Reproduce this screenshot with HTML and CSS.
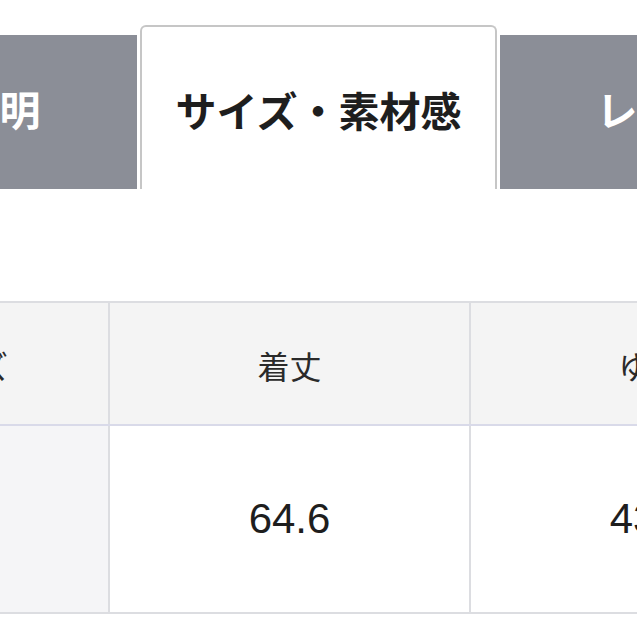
FILE: index.html
```html
<!DOCTYPE html>
<html lang="ja">
<head>
<meta charset="utf-8">
<title>サイズ・素材感</title>
<link rel="stylesheet" href="styles.css">
</head>
<body>
<div class="page">
  <nav class="tabs">
    <div class="tab">商品説明</div>
    <div class="tab tab-active">サイズ・素材感</div>
    <div class="tab">レビュー</div>
  </nav>
  <table class="size-table">
    <colgroup>
      <col class="col-size">
      <col class="col-val">
      <col class="col-val">
    </colgroup>
    <thead>
      <tr>
        <th>サイズ</th>
        <th>着丈</th>
        <th>ゆき</th>
      </tr>
    </thead>
    <tbody>
      <tr>
        <td class="size-name">M</td>
        <td>64.6</td>
        <td>43.5</td>
      </tr>
    </tbody>
  </table>
</div>
</body>
</html>
```

FILE: styles.css
```css
html, body {
  margin: 0;
  padding: 0;
  background: #ffffff;
}

body {
  width: 637px;
  height: 637px;
  overflow: hidden;
  font-family: "Liberation Sans", "Noto Sans CJK JP", sans-serif;
}

.page {
  width: 637px;
}

.tabs {
  display: flex;
  align-items: flex-end;
  gap: 3px;
  margin-left: -220px;
  padding-top: 25px;
  height: 164px;
}

.tab {
  flex: none;
  width: 357px;
  height: 154px;
  box-sizing: border-box;
  padding-bottom: 8px;
  background: #8b8e97;
  color: #ffffff;
  font-family: "Noto Sans CJK JP", sans-serif;
  font-weight: 700;
  font-size: 41px;
  display: flex;
  align-items: center;
  justify-content: center;
}

.tab-active {
  height: 164px;
  background: #ffffff;
  color: #1e1e1e;
  border: 2px solid #c6c6c6;
  border-bottom: none;
  border-radius: 6px 6px 0 0;
  padding-top: 10px;
  padding-bottom: 8px;
}

.size-table {
  margin-top: 112px;
  margin-left: -189px;
  width: 1019px;
  table-layout: fixed;
  border-collapse: collapse;
}

.col-size {
  width: 297px;
}

.col-val {
  width: 361px;
}

.size-table th,
.size-table td {
  border: 2px solid #dcdde1;
  text-align: center;
  vertical-align: middle;
  padding: 0;
}

.size-table th {
  height: 123px;
  background: #f4f4f4;
  font-family: "Noto Sans CJK JP", sans-serif;
  font-weight: 400;
  font-size: 32px;
  color: #2a2a2a;
  padding-top: 2px;
  box-sizing: border-box;
  border-bottom-color: #d9dae9;
}

.size-table td {
  height: 186px;
  background: #ffffff;
  font-size: 42px;
  color: #1e1e1e;
}

.size-table td.size-name {
  background: #f5f5f7;
}
```
